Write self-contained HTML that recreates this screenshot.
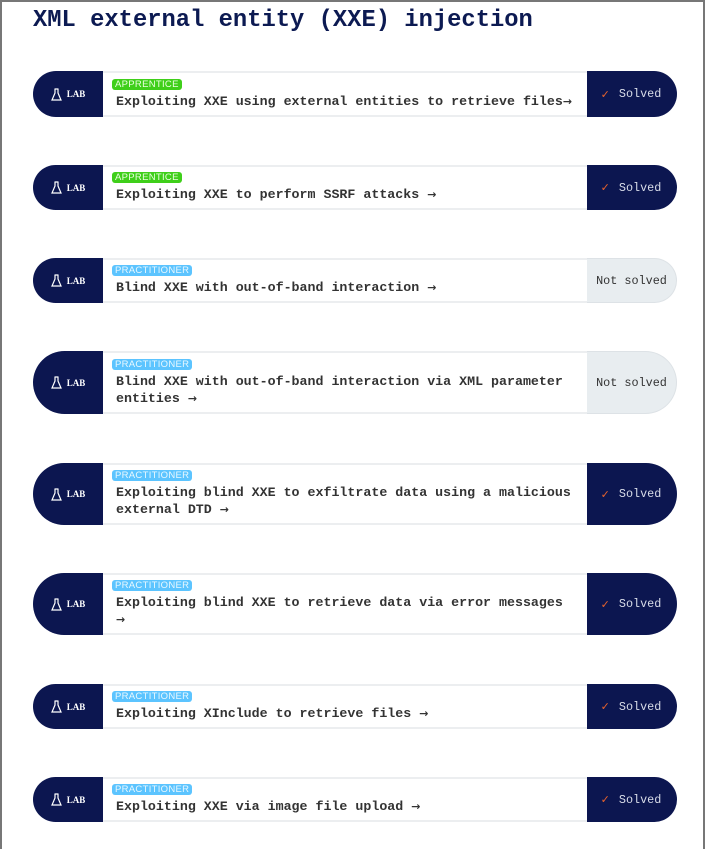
<!DOCTYPE html>
<html><head><meta charset="utf-8"><style>
*{margin:0;padding:0;box-sizing:border-box}
body{width:705px;height:849px;background:#fff;position:relative;overflow:hidden;font-family:"Liberation Mono",monospace}
.frame{position:absolute;left:0;top:0;width:705px;height:849px;border:2px solid #777;border-bottom:none}
h1{position:absolute;left:33px;top:7px;font-size:23.8px;font-weight:bold;color:#0c1a52;letter-spacing:0}
.row{position:absolute;left:33px;width:644px;display:flex}
.lab{width:70px;background:#0c1650;border-radius:40px 0 0 40px;color:#fff;display:flex;align-items:center;justify-content:center;font-family:"Liberation Serif",serif;font-weight:bold;font-size:9px;gap:5px}
.lab svg{width:11px;height:13px}
.mid{flex:1;border-top:2px solid #eceef0;border-bottom:2px solid #eceef0;display:flex;flex-direction:column;justify-content:center;padding-left:13px;padding-right:6px}
.badge{display:inline-block;align-self:flex-start;font-family:"Liberation Sans",sans-serif;font-size:9.5px;color:#e8f8ff;padding:0 3px;border-radius:3px;line-height:11px;margin-left:-4px;letter-spacing:0.3px}
.ap{background:#3fcf1a;color:#eaffdf}
.pr{background:#5cc4ff}
.t{font-size:13.3px;font-weight:bold;color:#333;line-height:17px;margin-top:3px}
.t i{font-style:normal;font-family:"DejaVu Sans",sans-serif;font-size:11px;font-weight:bold}
.st{width:90px;border-radius:0 40px 40px 0;display:flex;align-items:center;justify-content:center;font-size:11.8px;padding-right:2px}
.sv{background:#0c1650;color:#d8dce8}
.sv b{color:#e8622c;font-weight:bold;margin-right:9px;font-family:"DejaVu Sans",sans-serif;font-size:11px}
.ns{background:#e8edf0;color:#333;border:1px solid #dde2e6;border-left:none;padding-right:0}
</style></head><body>
<div class="frame"></div>
<h1>XML external entity (XXE) injection</h1>

<div class="row" style="top:71px;height:46px"><div class="lab"><svg viewBox="0 0 11 13"><path d="M3.5 1h4M4 1v4L1 12h9L7 5V1" fill="none" stroke="#fff" stroke-width="1.2"/></svg>LAB</div><div class="mid"><span class="badge ap">APPRENTICE</span><div class="t">Exploiting XXE using external entities to retrieve files<i>→</i></div></div><div class="st sv"><b>✓</b>Solved</div></div>

<div class="row" style="top:165px;height:45px"><div class="lab"><svg viewBox="0 0 11 13"><path d="M3.5 1h4M4 1v4L1 12h9L7 5V1" fill="none" stroke="#fff" stroke-width="1.2"/></svg>LAB</div><div class="mid"><span class="badge ap">APPRENTICE</span><div class="t">Exploiting XXE to perform SSRF attacks <i>→</i></div></div><div class="st sv"><b>✓</b>Solved</div></div>

<div class="row" style="top:258px;height:45px"><div class="lab"><svg viewBox="0 0 11 13"><path d="M3.5 1h4M4 1v4L1 12h9L7 5V1" fill="none" stroke="#fff" stroke-width="1.2"/></svg>LAB</div><div class="mid"><span class="badge pr">PRACTITIONER</span><div class="t">Blind XXE with out-of-band interaction <i>→</i></div></div><div class="st ns">Not solved</div></div>

<div class="row" style="top:351px;height:63px"><div class="lab"><svg viewBox="0 0 11 13"><path d="M3.5 1h4M4 1v4L1 12h9L7 5V1" fill="none" stroke="#fff" stroke-width="1.2"/></svg>LAB</div><div class="mid"><span class="badge pr">PRACTITIONER</span><div class="t">Blind XXE with out-of-band interaction via XML parameter<br>entities <i>→</i></div></div><div class="st ns">Not solved</div></div>

<div class="row" style="top:463px;height:62px"><div class="lab"><svg viewBox="0 0 11 13"><path d="M3.5 1h4M4 1v4L1 12h9L7 5V1" fill="none" stroke="#fff" stroke-width="1.2"/></svg>LAB</div><div class="mid"><span class="badge pr">PRACTITIONER</span><div class="t">Exploiting blind XXE to exfiltrate data using a malicious<br>external DTD <i>→</i></div></div><div class="st sv"><b>✓</b>Solved</div></div>

<div class="row" style="top:573px;height:62px"><div class="lab"><svg viewBox="0 0 11 13"><path d="M3.5 1h4M4 1v4L1 12h9L7 5V1" fill="none" stroke="#fff" stroke-width="1.2"/></svg>LAB</div><div class="mid"><span class="badge pr">PRACTITIONER</span><div class="t">Exploiting blind XXE to retrieve data via error messages<br><i>→</i></div></div><div class="st sv"><b>✓</b>Solved</div></div>

<div class="row" style="top:684px;height:45px"><div class="lab"><svg viewBox="0 0 11 13"><path d="M3.5 1h4M4 1v4L1 12h9L7 5V1" fill="none" stroke="#fff" stroke-width="1.2"/></svg>LAB</div><div class="mid"><span class="badge pr">PRACTITIONER</span><div class="t">Exploiting XInclude to retrieve files <i>→</i></div></div><div class="st sv"><b>✓</b>Solved</div></div>

<div class="row" style="top:777px;height:45px"><div class="lab"><svg viewBox="0 0 11 13"><path d="M3.5 1h4M4 1v4L1 12h9L7 5V1" fill="none" stroke="#fff" stroke-width="1.2"/></svg>LAB</div><div class="mid"><span class="badge pr">PRACTITIONER</span><div class="t">Exploiting XXE via image file upload <i>→</i></div></div><div class="st sv"><b>✓</b>Solved</div></div>
</body></html>
